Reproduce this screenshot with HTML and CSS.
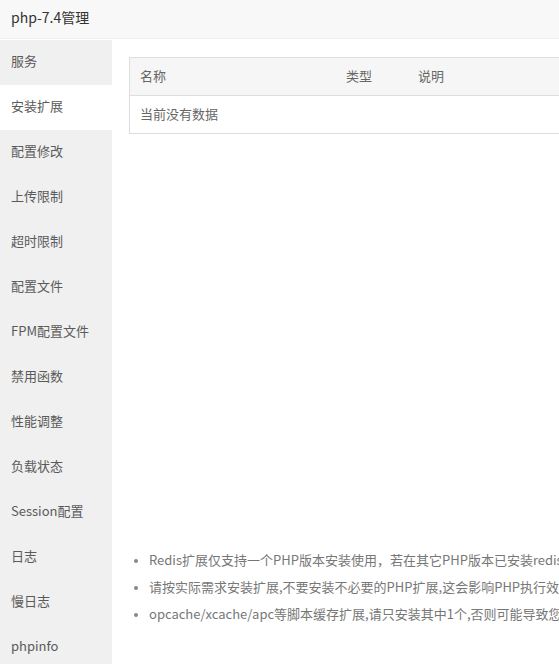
FILE: index.html
```html
<!DOCTYPE html>
<html lang="zh-CN">
<head>
<meta charset="utf-8">
<title>php-7.4管理</title>
<link rel="stylesheet" href="styles.css">
</head>
<body>
<div class="dialog">
  <div class="title">php-7.4管理</div>
  <div class="main">
    <ul class="menu">
      <li>服务</li>
      <li class="active">安装扩展</li>
      <li>配置修改</li>
      <li>上传限制</li>
      <li>超时限制</li>
      <li>配置文件</li>
      <li>FPM配置文件</li>
      <li>禁用函数</li>
      <li>性能调整</li>
      <li>负载状态</li>
      <li>Session配置</li>
      <li>日志</li>
      <li>慢日志</li>
      <li>phpinfo</li>
    </ul>
    <div class="content">
      <table class="grid">
        <thead>
          <tr><th class="c-name">名称</th><th class="c-type">类型</th><th class="c-desc">说明</th></tr>
        </thead>
        <tbody>
          <tr><td colspan="3">当前没有数据</td></tr>
        </tbody>
      </table>
      <ul class="help">
        <li>Redis扩展仅支持一个PHP版本安装使用，若在其它PHP版本已安装redis扩展，请勿再装</li>
        <li>请按实际需求安装扩展,不要安装不必要的PHP扩展,这会影响PHP执行效率，甚至出现异常</li>
        <li>opcache/xcache/apc等脚本缓存扩展,请只安装其中1个,否则可能导致您的站点程序异常</li>
      </ul>
    </div>
  </div>
</div>
</body>
</html>
```
FILE: styles.css
```css
html, body {
  margin: 0;
  padding: 0;
  width: 559px;
  height: 664px;
  overflow: hidden;
  background: #fff;
}
body {
  font-family: "Noto Sans CJK SC", "Open Sans", sans-serif;
  color: #555;
}
.dialog {
  display: flex;
  flex-direction: column;
  height: 664px;
}
.title {
  height: 38px;
  line-height: 34px;
  padding-left: 11px;
  font-size: 14px;
  color: #333;
  background: #f8f8f8;
  border-bottom: 1px solid #eee;
  margin-bottom: 1px;
}
.main {
  display: flex;
  flex: 1;
  min-height: 0;
}
.menu {
  list-style: none;
  margin: 0;
  padding: 0;
  width: 112px;
  flex: none;
  background: #f0f0f0;
}
.menu li {
  height: 45px;
  line-height: 42px;
  padding-left: 11px;
  font-size: 13px;
  color: #5a5a5a;
  white-space: nowrap;
}
.menu li.active {
  background: #fff;
}
.content {
  flex: 1;
  padding: 17px 0 0 17px;
  overflow: hidden;
}
.grid {
  width: 640px;
  border-collapse: collapse;
  border: 1px solid #ddd;
  font-size: 13px;
}
.grid th {
  height: 35px;
  padding: 0 10px 2px;
  text-align: left;
  font-weight: normal;
  color: #666;
  background: #f6f6f6;
  border-bottom: 1px solid #ddd;
}
.grid th.c-name { width: 186px; }
.grid th.c-type { width: 52px; }
.grid td {
  height: 35px;
  padding: 0 10px 2px;
  color: #666;
}
.help {
  margin: 412px 0 0 0;
  padding: 0 0 0 20px;
  font-size: 13px;
  color: #777;
  white-space: nowrap;
}
.help li {
  line-height: 27px;
}
.help li::marker {
  color: #888;
  font-size: 11px;
}
```
